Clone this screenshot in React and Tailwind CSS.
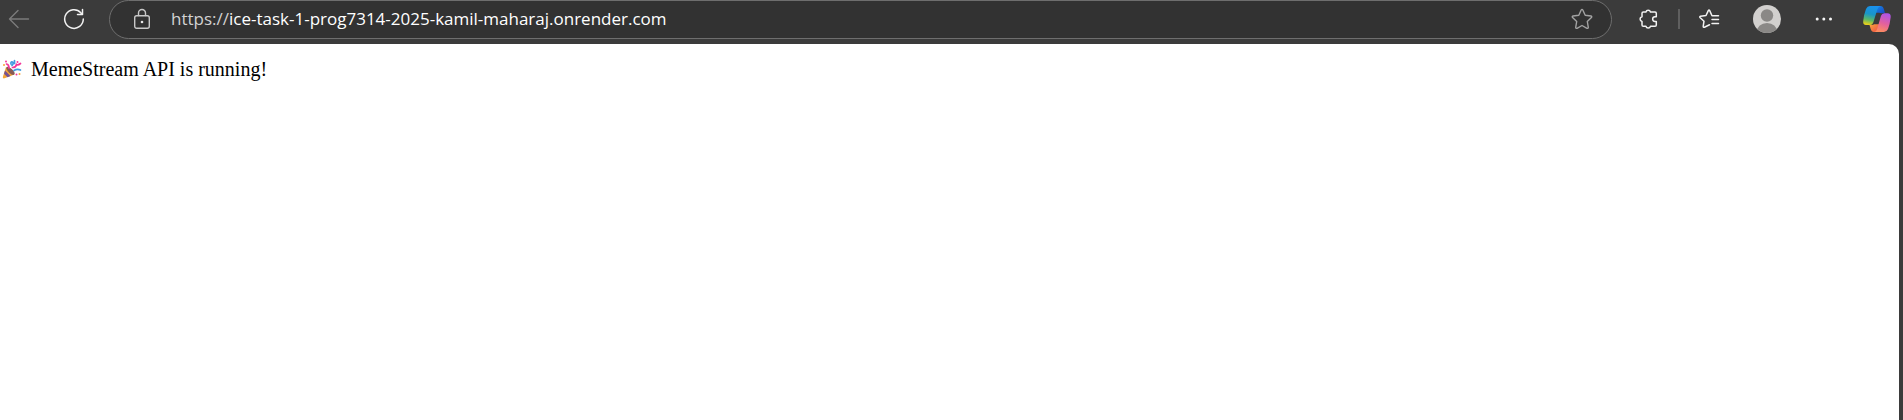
import React from "react";

const line = { fill: "none", strokeLinecap: "round", strokeLinejoin: "round" };

function BackIcon() {
  return (
    <svg width="22" height="22" viewBox="0 0 22 22" stroke="#7b7b7b" strokeWidth="1.4" {...line}>
      <path d="M20.5 11H1.5M10 2.5L1.5 11L10 19.5" />
    </svg>
  );
}

function ReloadIcon() {
  return (
    <svg width="22" height="22" viewBox="0 0 22 22" stroke="#f2f2f2" strokeWidth="1.5" {...line}>
      <path d="M20.3 11A9.3 9.3 0 1 1 17.8 4.7L19.3 6.2M19.5 1.5V6.5H14.5" />
    </svg>
  );
}

function LockIcon() {
  return (
    <svg width="18" height="22" viewBox="0 0 18 22" stroke="#c8c8c8" strokeWidth="1.4" {...line}>
      <rect x="1.7" y="7.7" width="14.6" height="12.6" rx="2" />
      <path d="M5.5 7.5V5A3.5 3.5 0 0 1 12.500 5V7.500" />
      <circle cx="9" cy="14" r="1.3" fill="#e8e8e8" stroke="none" />
    </svg>
  );
}

function StarIcon() {
  return (
    <svg width="22" height="22" viewBox="0 0 22 22" stroke="#a3a3a3" strokeWidth="1.4" {...line}>
      <path d="M10.2 2Q11 .7 11.8 2L14.2 7.2L20 8Q21.3 8.4 20.4 9.5L16.3 13.5L17.3 19.4Q17.2 20.7 16 20.3L11 17.5L6 20.3Q4.8 20.7 4.7 19.4L5.7 13.5L1.6 9.5Q.7 8.4 2 8L7.8 7.2Z" />
    </svg>
  );
}

function PuzzleIcon() {
  return (
    <svg width="24" height="24" viewBox="0 0 24 24" stroke="#f2f2f2" strokeWidth="1.5" {...line}>
      <path d="M9.9 5A2.4 2.4 0 0 1 14.5 5H19Q20.300 5 20.300 6.300V9.700H19A2.350 2.350 0 0 0 19 14.400H20.300V18Q20.300 19.300 19 19.300H14.500A2.400 2.400 0 0 1 9.900 19.300H7.300Q6 19.300 6 18V14.400A2.400 2.400 0 0 1 6 9.700V6.300Q6 5 7.300 5Z" />
    </svg>
  );
}

function FavoritesIcon() {
  return (
    <svg width="24" height="24" viewBox="0 0 24 24" stroke="#f2f2f2" strokeWidth="1.5" {...line}>
      <path d="M20.500 8.800H14L11.700 3.600Q11 2.400 10.300 3.600L8 8.500L2.500 9.200Q1.200 9.600 2.200 10.700L6 14.200L5.200 19.300Q5.200 20.700 6.400 20.200L11.500 17.800M14 12.500H20.500M14 16.500H20.500" />
    </svg>
  );
}

function Avatar() {
  return (
    <svg width="28" height="28" viewBox="0 0 28 28">
      <clipPath id="avatar-disc"><circle cx="14" cy="14" r="14" /></clipPath>
      <g clipPath="url(#avatar-disc)">
        <rect width="28" height="28" fill="#d2d0ce" />
        <circle cx="14" cy="10.500" r="6.200" fill="#8a8886" />
        <path d="M3 28Q5 18 14 18T25 28Z" fill="#8a8886" />
      </g>
    </svg>
  );
}

function MoreIcon() {
  return (
    <svg width="24" height="24" viewBox="0 0 24 24" fill="#f5f5f5">
      <circle cx="5.2" cy="12" r="1.5" />
      <circle cx="11.8" cy="12" r="1.5" />
      <circle cx="18.5" cy="12" r="1.5" />
    </svg>
  );
}

function CopilotIcon() {
  return (
    <svg width="30" height="28" viewBox="0 0 30 28">
      <defs>
        <linearGradient id="cp-left" x1=".6" y1="0" x2=".4" y2="1">
          <stop offset="0" stopColor="#1a90ee" />
          <stop offset=".45" stopColor="#1996c8" />
          <stop offset=".75" stopColor="#5cb867" />
          <stop offset="1" stopColor="#e5cf1c" />
        </linearGradient>
        <linearGradient id="cp-right" x1=".6" y1="0" x2=".3" y2="1">
          <stop offset="0" stopColor="#b054e6" />
          <stop offset=".5" stopColor="#e2609f" />
          <stop offset="1" stopColor="#ff8f5c" />
        </linearGradient>
        <linearGradient id="cp-top" x1="0" y1="0" x2="1" y2="1">
          <stop offset="0" stopColor="#1687e8" />
          <stop offset="1" stopColor="#1848c4" />
        </linearGradient>
        <linearGradient id="cp-bottom" x1="0" y1="0" x2="1" y2="1">
          <stop offset="0" stopColor="#f7a63b" />
          <stop offset="1" stopColor="#ef4b48" />
        </linearGradient>
      </defs>
      <path d="M14 1H18.500Q21 1 21.800 4L23 8.200H20Q18 8.200 17 7.800H14Z" fill="url(#cp-top)" />
      <path d="M17 27H12Q9.500 27 8.700 24L7.500 20H10Q11.500 20 12 19.300H17Z" fill="url(#cp-bottom)" />
      <path d="M8 1H18.500Q16.200 1.500 15.300 4.500L11.300 17.500Q10.500 20 8 20H4Q.8 20 1.200 16Q2 9 4 4Q5.300 1 8 1Z" fill="url(#cp-left)" />
      <path d="M22 27H12.500Q14.500 26.500 15.300 23.500L19 10.800Q19.800 8.200 22.500 8.200H25.500Q29 8.200 28.700 12Q28 19 26 24Q24.700 27 22 27Z" fill="url(#cp-right)" />
    </svg>
  );
}

function PartyPopper() {
  return (
    <svg width="20" height="20" viewBox="0 0 20 20" role="img" aria-label="Party popper">
      <path d="M4 8L.8 18Q.6 19.700 2.500 19.300L12.500 15.500Z" fill="#f5a637" />
      <path d="M3 11.500L8.500 17L5.500 18.200L2 14.700Z" fill="#765293" />
      <ellipse cx="8.500" cy="11.800" rx="2.200" ry="5.300" transform="rotate(-46 8.500 11.800)" fill="#875b55" />
      <g fill="none" strokeWidth="1.700" strokeLinecap="round">
        <path d="M4.500 5Q7 5.500 7 9M10.500 8.500Q14 8.500 14.500 5.500Q16 6.500 18.500 4.500" stroke="#f4369a" />
        <path d="M9 5Q8.500 2.500 10.500 3Q12 4 10 6.500M12.500 1.500V4.500M12 11.500Q15 9.500 18.500 11" stroke="#429be0" />
      </g>
      <g fill="#f4369a">
        <circle cx="4" cy="2.500" r="1" /><circle cx="15.500" cy="3" r="1" /><circle cx="14.500" cy="15.500" r="1" />
      </g>
      <circle cx="2" cy="6" r="1" fill="#f5a637" />
      <circle cx="17.500" cy="15" r="1" fill="#f5a637" />
    </svg>
  );
}

export default function App() {
  return (
    <div className="flex min-h-screen flex-col bg-[#3b3b3b]">
      <header className="flex h-11 items-start pr-[11px] pl-2">
        <nav aria-label="Browser controls" className="flex h-[38px] items-center gap-[33px]">
          <button type="button" aria-label="Back" disabled><BackIcon /></button>
          <button type="button" aria-label="Refresh"><ReloadIcon /></button>
        </nav>
        <form className="ml-6 flex h-[39px] flex-1 items-center rounded-full border border-[#6e6e6e] bg-[#323232] pr-[18px] pb-0.5 pl-[23px]">
          <button type="button" aria-label="View site information"><LockIcon /></button>
          <label className="ml-5 flex flex-1 font-['Open_Sans',sans-serif] text-[17px] leading-6 text-white">
            <span className="text-[#d2d2d2]">https://</span>
            <input
              type="text"
              aria-label="Address"
              defaultValue="ice-task-1-prog7314-2025-kamil-maharaj.onrender.com"
              className="min-w-0 flex-1 bg-transparent outline-none"
            />
          </label>
          <button type="button" aria-label="Add to favorites"><StarIcon /></button>
        </form>
        <div className="flex h-[38px] items-center">
          <button type="button" aria-label="Extensions" className="ml-6"><PuzzleIcon /></button>
          <div className="mx-[18px] h-5 w-0.5 bg-[#5f5f5f]" />
          <button type="button" aria-label="Favorites"><FavoritesIcon /></button>
          <button type="button" aria-label="Profile" className="ml-[31px]"><Avatar /></button>
          <button type="button" aria-label="Settings and more" className="ml-[31px]"><MoreIcon /></button>
          <button type="button" aria-label="Copilot" className="ml-[26px]"><CopilotIcon /></button>
        </div>
      </header>
      <main className="mr-1 flex-1 rounded-tr-[10px] bg-white pt-[13px] pl-0.5">
        <p className="flex items-center gap-[9px] font-['Liberation_Serif',serif] text-[20px] leading-6 text-black">
          <PartyPopper />
          MemeStream API is running!
        </p>
      </main>
    </div>
  );
}
